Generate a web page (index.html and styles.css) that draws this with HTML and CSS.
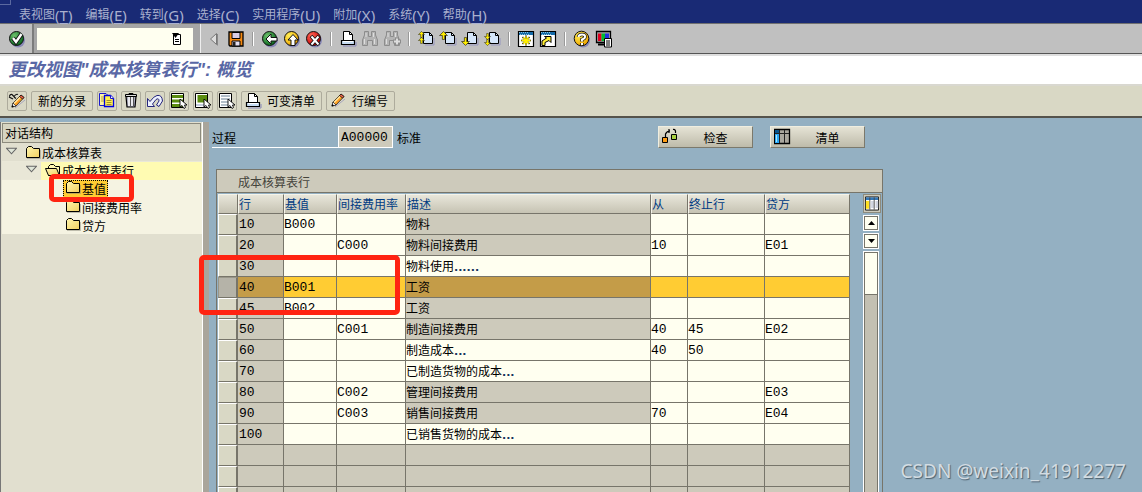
FILE: index.html
```html
<!DOCTYPE html>
<html lang="zh-CN">
<head>
<meta charset="utf-8">
<title>更改视图"成本核算表行": 概览</title>
<link rel="stylesheet" href="styles.css">
</head>
<body>
<svg class="sprite" aria-hidden="true">
  <defs>
    <linearGradient id="gy" x1="0" y1="0" x2="1" y2="1"><stop offset="0" stop-color="#fff6b0"/><stop offset="1" stop-color="#f2d060"/></linearGradient>
    <radialGradient id="gg" cx=".35" cy=".3" r=".7"><stop offset="0" stop-color="#6cc06c"/><stop offset="1" stop-color="#0d6b20"/></radialGradient>
    <radialGradient id="go" cx=".35" cy=".3" r=".7"><stop offset="0" stop-color="#fff05a"/><stop offset="1" stop-color="#f0a800"/></radialGradient>
    <radialGradient id="gr" cx=".35" cy=".3" r=".7"><stop offset="0" stop-color="#ff6a5a"/><stop offset="1" stop-color="#cc0000"/></radialGradient>
    <symbol id="folder" viewBox="0 0 16 14"><path d="M1.500 12.500V3.500L3.500 1.500H6.500L8.500 3.500H14.500V12.500Z" fill="url(#gy)" stroke="#000"/><path d="M2 13.500H15.500V5" fill="none" stroke="#8a8878" opacity=".5"/></symbol>
    <symbol id="folder-open" viewBox="0 0 16 14"><path d="M3.500 12.500V3.500L5.500 1.500H8.500L10.500 3.500H14.500V12.500Z" fill="#fff6b0" stroke="#000"/><path d="M0.500 5.500H11.500L14.500 12.500H3.500Z" fill="url(#gy)" stroke="#000"/></symbol>
    <symbol id="page" viewBox="0 0 18 18"><path d="M6.500 2.500H12.500L15.500 5.500V13.500H6.500Z" fill="#d5e6fa" stroke="#000"/><path d="M12.500 2.500V5.500H15.500" fill="none" stroke="#000"/><path d="M8 15H17V8" fill="none" stroke="#8888c0" opacity=".7"/></symbol>
    <symbol id="up" viewBox="0 0 8 8"><path d="M4 .5L7.500 4H5V7.500H3V4H.5Z" fill="#ffee00" stroke="#000" stroke-width=".5"/></symbol>
    <symbol id="down" viewBox="0 0 8 8"><path d="M4 7.500L7.500 4H5V.5H3V4H.5Z" fill="#ffee00" stroke="#000" stroke-width=".5"/></symbol>
    <symbol id="binoc" viewBox="0 0 18 18"><path d="M3.500 1.500H7.500V6.500H10.500V1.500H14.500V5L16.500 10V15.500H11.500V10.500H6.500V15.500H1.500V10L3.500 5Z" fill="#b4b4b4" stroke="#8c8c8c"/><path d="M5 3V7M3.500 9V14M12.500 3V7M13.500 9V14" stroke="#ddd"/></symbol>
    <symbol id="printer" viewBox="0 0 18 18"><path d="M4.500 11V1.500H10.500L13.500 4.500V11" fill="#fff" stroke="#000"/><path d="M10.500 1.500V4.500H13.500" fill="none" stroke="#000"/><path d="M2.500 10.500H15.500V14.500H2.500Z" fill="#c8def4" stroke="#000" stroke-width="1.200"/><path d="M4 11.500H14" stroke="#fff"/><path d="M4 16H17V12" fill="none" stroke="#8888b8"/></symbol>
    <symbol id="cursor" viewBox="0 0 9 10"><path d="M1 0V8L3 6.500L5 9.500L6.500 8.500L5.500 6H8Z" fill="#fff" stroke="#000" stroke-width=".9"/></symbol>
    <symbol id="pencil" viewBox="0 0 18 18"><path d="M3 14L4 10L12 2L15 4.500L7 13Z" fill="#ff9f20" stroke="#222" stroke-width=".8"/><path d="M5 10.500L12.500 3" stroke="#ffe9a0" stroke-width="1.500"/><path d="M12 2L15 4.500L13.500 6L10.500 3.500Z" fill="#ee6650" stroke="#000" stroke-width=".7"/><path d="M3 14L4 10L7 13Z" fill="#fff" stroke="#222" stroke-width=".7"/><path d="M2.500 14.500L3.500 12L5 13.500Z"/><path d="M6 15L16 7" stroke="#9090bb" stroke-width=".7"/></symbol>
    <symbol id="window" viewBox="0 0 18 18"><path d="M1.500 1.500H16.500V16.500H1.500Z" fill="#fff" stroke="#000" stroke-width="1.200"/><path d="M2 2H16V5H2Z" fill="#146aa8"/><path d="M2 2.500H12M3 4.500H13" stroke="#8bc2dc" stroke-dasharray="1 1"/></symbol>
  </defs>
</svg>

<nav class="menubar" aria-label="菜单">
  <button>表视图<span>(<u>T</u>)</span></button>
  <button>编辑<span>(<u>E</u>)</span></button>
  <button>转到<span>(<u>G</u>)</span></button>
  <button>选择<span>(<u>C</u>)</span></button>
  <button>实用程序<span>(<u>U</u>)</span></button>
  <button>附加<span>(<u>X</u>)</span></button>
  <button>系统<span>(<u>Y</u>)</span></button>
  <button>帮助<span>(<u>H</u>)</span></button>
</nav>

<div class="toolbar">
  <button class="enter" aria-label="回车"><svg class="icon" viewBox="0 0 18 18"><circle cx="10" cy="10.500" r="7" fill="#8888b5"/><circle cx="8.500" cy="8.500" r="7" fill="url(#gg)" stroke="#111"/><path d="M5 8L8 12L13.500 4" fill="none" stroke="#111" stroke-width="4.200"/><path d="M5 8L8 12L13.500 4" fill="none" stroke="#fff" stroke-width="2.400"/></svg></button>
  <div class="command">
    <input class="command-input" type="text" aria-label="命令">
    <button class="history" aria-label="历史"><svg viewBox="0 0 10 12"><path d="M1.500 1.500H8.500V11.500H1.500Z" fill="#fff" stroke="#000"/><path d="M0 0H7L3.500 5Z"/><path d="M3 6.500H7M3 8.500H7" stroke="#000"/></svg></button>
  </div>
  <div class="tools">
    <button class="tool" aria-label="收起"><svg class="icon" viewBox="0 0 18 18"><path d="M11.500 3.500V14.500L5.500 9Z" fill="#ddd" stroke="#777"/><path d="M12.500 4V15.500" stroke="#888"/></svg></button>
    <button class="tool" aria-label="保存"><svg class="icon" viewBox="0 0 18 18"><path d="M2 2H16V16H3L2 15Z" fill="#f58a12" stroke="#000" stroke-width="1.300"/><path d="M5 2.500H13V8.500H5Z" fill="#d8cce6" stroke="#000"/><path d="M5 11H13V16H5Z" fill="#e4def0" stroke="#000"/><path d="M6 12H8.500V16H6Z" fill="#222"/></svg></button>
    <i class="sep"></i>
    <button class="tool" aria-label="返回"><svg class="icon" viewBox="0 0 18 18"><circle cx="10" cy="10.500" r="7" fill="#8888b5"/><circle cx="8.500" cy="8.500" r="7" fill="url(#gg)" stroke="#111"/><path d="M5 9L10 4V7.500H16V11H10V14Z" fill="#fff" stroke="#111"/></svg></button>
    <button class="tool" aria-label="退出"><svg class="icon" viewBox="0 0 18 18"><circle cx="10" cy="10.500" r="7" fill="#8888b5"/><circle cx="8.500" cy="8.500" r="7" fill="url(#go)" stroke="#111"/><path d="M10 4.500L15 10H12V15.500H8V10H5Z" fill="#fff" stroke="#111"/></svg></button>
    <button class="tool" aria-label="取消"><svg class="icon" viewBox="0 0 18 18"><circle cx="10" cy="10.500" r="7" fill="#8888b5"/><circle cx="8.500" cy="8.500" r="7" fill="url(#gr)" stroke="#111"/><path d="M6 6L14 15M14 6L6 15" stroke="#111" stroke-width="3.600"/><path d="M6.500 6.500L13.500 14.500M13.500 6.500L6.500 14.500" stroke="#fff" stroke-width="2"/></svg></button>
    <i class="sep"></i>
    <button class="tool" aria-label="打印"><svg class="icon"><use href="#printer"/></svg></button>
    <button class="tool" aria-label="查找"><svg class="icon"><use href="#binoc"/></svg></button>
    <button class="tool" aria-label="继续查找"><svg class="icon" viewBox="0 0 18 18"><use href="#binoc"/><path d="M10 11.500H18M14 7.500V15.500" stroke="#8c8c8c" stroke-width="4"/><path d="M11 11.500H17M14 8.500V14.500" stroke="#ddd" stroke-width="2"/></svg></button>
    <i class="sep"></i>
    <button class="tool" aria-label="首页"><svg class="icon" viewBox="0 0 18 18"><use href="#page"/><use href="#up" x="0" y="1" width="9" height="7"/><use href="#up" x="0" y="7" width="9" height="7"/></svg></button>
    <button class="tool" aria-label="上一页"><svg class="icon" viewBox="0 0 18 18"><use href="#page"/><use href="#up" x="0" y="1" width="9" height="9"/></svg></button>
    <button class="tool" aria-label="下一页"><svg class="icon" viewBox="0 0 18 18"><use href="#page"/><use href="#down" x="0" y="7" width="9" height="9"/></svg></button>
    <button class="tool" aria-label="末页"><svg class="icon" viewBox="0 0 18 18"><use href="#page"/><use href="#down" x="0" y="3" width="9" height="7"/><use href="#down" x="0" y="9" width="9" height="7"/></svg></button>
    <i class="sep"></i>
    <button class="tool" aria-label="新会话"><svg class="icon" viewBox="0 0 18 18"><use href="#window"/><path d="M9 5.500V15.500M4 10.500H14M5.500 7L12.500 14M12.500 7L5.500 14" stroke="#111" stroke-width="1.600"/><path d="M9 6V15M4.500 10.500H13.500M6 7.500L12 13.500M12 7.500L6 13.500" stroke="#ffee00" stroke-width="1.300"/></svg></button>
    <button class="tool" aria-label="快捷方式"><svg class="icon" viewBox="0 0 18 18"><use href="#window"/><path d="M3 15.500V11L7.500 8L5.500 6.500H12V12.500L10 10.500L6 12.500V15.500Z" fill="#ffee33" stroke="#000"/></svg></button>
    <i class="sep"></i>
    <button class="tool" aria-label="帮助"><svg class="icon" viewBox="0 0 18 18"><circle cx="10" cy="10.500" r="7" fill="#8888b5"/><circle cx="8.500" cy="8.500" r="7.300" fill="url(#go)" stroke="#111"/><path d="M5.500 7Q5.500 4.500 9 4.500T12 7Q12 8.500 9 9.500V11.500M9 13V15" fill="none" stroke="#111" stroke-width="3.400"/><path d="M5.500 7Q5.500 4.500 9 4.500T12 7Q12 8.500 9 9.500V11.500M9 13V15" fill="none" stroke="#fff" stroke-width="2"/></svg></button>
    <button class="tool" aria-label="布局"><svg class="icon" viewBox="0 0 18 18"><path d="M1.500 1.500H15.500V12.500H1.500Z" fill="#aaa" stroke="#000" stroke-width="1.300"/><path d="M3 3.500H6.500V11H3Z" fill="#e00020"/><path d="M6.500 3.500H10V11H6.500Z" fill="#00bb30"/><path d="M10 3.500H14V11H10Z" fill="#2030e0"/><path d="M3 14.500H10" stroke="#000" stroke-width="2"/><path d="M9.500 8.500H16.500V17H9.500Z" fill="#fff" stroke="#000"/><path d="M11 11H15M11 13H15M11 15H15" stroke="#000"/></svg></button>
  </div>
</div>

<h1 class="title">更改视图"成本核算表行": 概览</h1>

<div class="actions">
  <button class="action" aria-label="显示/更改"><svg class="icon" viewBox="0 0 18 18"><use href="#pencil" x="1" y="1"/><path d="M1.500 4.500Q2 2 4 2.500L6 4.500Q8 1.500 10 2.500M1 5L5 7M6 5L8 6.500" fill="none" stroke="#111" stroke-width="1.200"/></svg></button>
  <button class="action action-text">新的分录</button>
  <button class="action" aria-label="复制"><svg class="icon" viewBox="0 0 18 18"><path d="M1.500 1.500H8L11 4.500V13.500H1.500Z" fill="#fff6a0" stroke="#1a1acc"/><path d="M3 5H7M3 7H7M3 9H7" stroke="#b9a040"/><path d="M6.500 3.500H12.500L15.500 6.500V14.500H6.500Z" fill="#ffef50" stroke="#0000dd" stroke-width="1.300"/><path d="M12.500 3.500V6.500H15.500" fill="#fff" stroke="#1a1acc"/><path d="M8.500 8.500H13.500M8.500 10.500H13.500M8.500 12.500H13.500" stroke="#a39030"/></svg></button>
  <button class="action" aria-label="删除"><svg class="icon" viewBox="0 0 18 18"><path d="M4 4.500H14L13 15H5Z" fill="#a9a9bb" stroke="#000" stroke-width="1.200"/><path d="M7 5V14M10 5V14" stroke="#fff" stroke-width="1.500"/><path d="M8.500 5V14M11.500 5V14" stroke="#555"/><path d="M3.500 2.500H14.500V4.500H3.500Z" fill="#ddd" stroke="#000"/><path d="M7 2.500V1.500H11V2.500" fill="none" stroke="#000"/></svg></button>
  <button class="action" aria-label="撤销"><svg class="icon" viewBox="0 0 18 18"><path d="M1.500 6.500V14.500H8.500L6.500 12L10 7.500Q13 5.500 13 9L10.500 13L13 14.500L16.500 9Q16 2.500 11 3.500Q8 4 4 9.500Z" fill="#eef2ff" stroke="#24247c"/></svg></button>
  <button class="action" aria-label="全选"><svg class="icon" viewBox="0 0 18 18"><path d="M1.500 1.500H13.500V15.500H1.500Z" fill="#fff" stroke="#000"/><path d="M2 3H13V6H2ZM2 7.500H13V10.500H2ZM2 12H13V15H2Z" fill="#5b8c10"/><use href="#cursor" x="9" y="7" width="9" height="10"/></svg></button>
  <button class="action" aria-label="选择块"><svg class="icon" viewBox="0 0 18 18"><path d="M1.500 1.500H13.500V15.500H1.500Z" fill="#fff" stroke="#000"/><path d="M3.500 3H13V10.500H3.500Z" fill="#5b8c10"/><path d="M2 13H13" stroke="#89b"/><use href="#cursor" x="9" y="7" width="9" height="10"/></svg></button>
  <button class="action" aria-label="取消全选"><svg class="icon" viewBox="0 0 18 18"><path d="M1.500 1.500H13.500V15.500H1.500Z" fill="#fff" stroke="#000"/><path d="M3 4H12M3 7H12M3 10H12M3 13H12" stroke="#9aabb8" stroke-width="1.500"/><use href="#cursor" x="9" y="7" width="9" height="10"/></svg></button>
  <button class="action action-text"><svg class="icon"><use href="#printer"/></svg>可变清单</button>
  <button class="action action-text"><svg class="icon"><use href="#pencil"/></svg>行编号</button>
</div>

<main class="main">
  <aside class="sidebar">
    <h2 class="sidebar-head">对话结构</h2>
    <ul class="tree">
      <li class="node"><svg class="twisty" viewBox="0 0 10 7"><path d="M.5 1H9.500L5 6Z" fill="#dfe5d8" stroke="#666"/></svg><span class="label"><svg class="folder"><use href="#folder"/></svg>成本核算表</span></li>
      <li class="node level2"><svg class="twisty" viewBox="0 0 10 7"><path d="M.5 1H9.500L5 6Z" fill="#dfe5d8" stroke="#666"/></svg><span class="label active"><svg class="folder"><use href="#folder-open"/></svg>成本核算表行</span></li>
      <li class="node level3"><span class="label selected"><svg class="folder"><use href="#folder"/></svg>基值</span><i class="mark mark-node"></i></li>
      <li class="node level3"><span class="label"><svg class="folder"><use href="#folder"/></svg>间接费用率</span></li>
      <li class="node level3"><span class="label"><svg class="folder"><use href="#folder"/></svg>贷方</span></li>
    </ul>
  </aside>

  <section class="content">
    <div class="form">
      <label class="form-label" for="proc">过程</label>
      <input class="form-value" id="proc" value="A00000" readonly>
      <span class="form-text">标准</span>
      <div class="form-buttons">
        <button class="push"><svg class="icon" viewBox="0 0 18 18"><path d="M3.500 9V6Q5 3 8 3M7 1V5M11 1.500Q14 1 13.500 5" fill="none" stroke="#000" stroke-width="1.200"/><path d="M.5 9.500H5.500V14.500H.5Z" fill="#ff9c12" stroke="#000"/><path d="M9.500 6.500H14.500V11.500H9.500Z" fill="#a8d040" stroke="#000"/></svg><span>检查</span></button>
        <button class="push"><svg class="icon" viewBox="0 0 18 18"><path d="M.5 1.500H15.500V15.500H.5Z" fill="#aaa79e" stroke="#000" stroke-width="1.300"/><path d="M1 2H5V15H1Z" fill="#28a7f5"/><path d="M1 2H5V5H1Z" fill="#07558d"/><path d="M5.500 2V15M10.500 2V15M1 5.500H15" stroke="#222"/><path d="M2.500 7V14" stroke="#a5eaff"/></svg><span>清单</span></button>
      </div>
    </div>

    <div class="group">
      <h2 class="group-title">成本核算表行</h2>
      <div class="group-body">
        <table class="grid">
          <colgroup><col class="c-sel"><col class="c-row"><col class="c-base"><col class="c-rate"><col class="c-desc"><col class="c-from"><col class="c-to"><col class="c-credit"></colgroup>
          <thead><tr><th></th><th>行</th><th>基值</th><th>间接费用率</th><th>描述</th><th>从</th><th>终止行</th><th>贷方</th></tr></thead>
          <tbody>
            <tr><th></th><td class="ro">10</td><td>B000</td><td></td><td class="ro desc">物料</td><td></td><td></td><td></td></tr>
            <tr><th></th><td class="ro">20</td><td></td><td>C000</td><td class="ro desc">物料间接费用</td><td>10</td><td></td><td>E01</td></tr>
            <tr><th></th><td class="ro">30</td><td></td><td></td><td class="desc">物料使用<b>......</b></td><td></td><td></td><td></td></tr>
            <tr class="picked"><th></th><td class="ro">40</td><td>B001</td><td></td><td class="ro desc">工资</td><td></td><td></td><td></td></tr>
            <tr><th></th><td class="ro">45</td><td>B002</td><td></td><td class="ro desc">工资</td><td></td><td></td><td></td></tr>
            <tr><th></th><td class="ro">50</td><td></td><td>C001</td><td class="ro desc">制造间接费用</td><td>40</td><td>45</td><td>E02</td></tr>
            <tr><th></th><td class="ro">60</td><td></td><td></td><td class="desc">制造成本<b>...</b></td><td>40</td><td>50</td><td></td></tr>
            <tr><th></th><td class="ro">70</td><td></td><td></td><td class="desc">已制造货物的成本<b>...</b></td><td></td><td></td><td></td></tr>
            <tr><th></th><td class="ro">80</td><td></td><td>C002</td><td class="ro desc">管理间接费用</td><td></td><td></td><td>E03</td></tr>
            <tr><th></th><td class="ro">90</td><td></td><td>C003</td><td class="ro desc">销售间接费用</td><td>70</td><td></td><td>E04</td></tr>
            <tr><th></th><td class="ro">100</td><td></td><td></td><td class="desc">已销售货物的成本<b>...</b></td><td></td><td></td><td></td></tr>
            <tr class="empty"><th></th><td></td><td></td><td></td><td></td><td></td><td></td><td></td></tr>
            <tr class="empty"><th></th><td></td><td></td><td></td><td></td><td></td><td></td><td></td></tr>
            <tr class="empty"><th></th><td></td><td></td><td></td><td></td><td></td><td></td><td></td></tr>
          </tbody>
        </table>
        <div class="scroll">
          <button class="config" aria-label="配置"><svg viewBox="0 0 16 16"><path d="M.5 .5H15.500V15.500H.5Z" fill="#fff" stroke="#000"/><path d="M1 1H15V4H1Z" fill="#3579b8"/><path d="M1 5H5V14H1Z" fill="#ffe020"/><path d="M7 5H10V13H7ZM12 5H15V13H12Z" fill="#d0d4e0"/><path d="M5.500 1V15M10.500 1V15" stroke="#444"/></svg></button>
          <button class="step" aria-label="向上"><svg viewBox="0 0 9 5"><path d="M0 5L4.500 0L9 5Z"/></svg></button>
          <button class="step" aria-label="向下"><svg viewBox="0 0 9 5"><path d="M0 0H9L4.500 5Z"/></svg></button>
          <div class="track"><div class="thumb"></div></div>
        </div>
      </div>
      <i class="mark mark-rows"></i>
    </div>
  </section>
  <p class="watermark">CSDN @weixin_41912277</p>
</main>
</body>
</html>
```
FILE: styles.css
```css
* { box-sizing: border-box; }
body {
  margin: 0;
  height: 100vh;
  display: flex;
  flex-direction: column;
  overflow: hidden;
  background: #94b0c2;
  color: #000;
  font: 12px/16px "Liberation Sans", "Noto Sans CJK SC", sans-serif;
}
button, input { font: inherit; color: inherit; margin: 0; padding: 0; }
button { border: 0; background: none; }
h1, h2, p, ul { margin: 0; padding: 0; }
.sprite { position: absolute; width: 0; height: 0; }
.icon { display: block; flex: none; width: 18px; height: 18px; }

.menubar {
  position: relative;
  flex: none;
  display: flex;
  gap: 13px;
  height: 24px;
  padding: 6px 0 0 19px;
  background: #192a75;
  border-bottom: 1px solid #707070;
  color: #a9b0ce;
}
.menubar::before {
  content: "";
  position: absolute;
  left: 0;
  top: 0;
  width: 10px;
  height: 4px;
  border-right: 1px solid #5b69a0;
  border-bottom: 1px solid #5b69a0;
}
.menubar button { display: flex; height: 18px; line-height: 18px; }
.menubar span { font-family: "Noto Sans", sans-serif; font-size: 15px; }
.menubar u { text-underline-offset: 2px; }

.toolbar {
  flex: none;
  display: flex;
  align-items: center;
  height: 30px;
  background: #c0c0c0;
  border-bottom: 1px solid #555;
}
.enter { align-self: stretch; width: 34px; padding: 0 0 0 8px; border-right: 2px solid #7c7c7c; }
.command {
  align-self: stretch;
  display: flex;
  align-items: center;
  width: 166px;
  background: #fffff0;
  border: solid #a6a6a6;
  border-width: 4px 7px 3px 3px;
}
.command-input { flex: 1; min-width: 0; height: 20px; padding: 0 4px; border: 0; background: none; outline: 0; }
.history { width: 22px; height: 20px; }
.history svg { display: block; width: 10px; height: 12px; margin: 0 1px; }
.tools { display: flex; align-items: center; align-self: stretch; border-left: 1px solid #eee; padding-left: 2px; }
.tool { width: 22px; padding: 0 2px; }
.sep { width: 12px; height: 14px; border-left: 5px solid #c0c0c0; border-right: 5px solid #c0c0c0; background: linear-gradient(90deg, #999 50%, #fff 50%); }

.title {
  flex: none;
  height: 32px;
  padding: 1px 8px 0;
  border-top: 2px solid #dedede;
  border-bottom: 2px solid #d9d8d0;
  background: #fff;
  color: #5967a5;
  font-size: 18px;
  line-height: 27px;
  font-style: italic;
  font-weight: bold;
}

.actions {
  flex: none;
  display: flex;
  align-items: center;
  gap: 4px;
  height: 32px;
  padding: 0 7px;
  background: #d9d8c5;
  border-bottom: 2px solid #55534c;
}
.action {
  display: flex;
  align-items: center;
  justify-content: center;
  gap: 5px;
  width: 20px;
  height: 20px;
  border: 1px solid #adab9c;
  border-radius: 2px;
}
.action-text { width: auto; padding: 2px 6px 0; }
.action-text .icon { margin: -2px 0 0 -4px; }

.main { position: relative; flex: 1; min-height: 0; display: flex; }
.sidebar {
  flex: none;
  width: 209px;
  margin-top: 4px;
  padding: 1px 0 0 2px;
  background: #e1dfcf;
  border-right: 6px solid #a9a59b;
  box-shadow: inset -1px 0 #fff, inset 1px 0 #777;
}
.sidebar-head {
  height: 20px;
  margin-right: 2px;
  padding: 1px 2px;
  background: #d6d4c2;
  border: 1px solid #8c8a7d;
  font-size: 12px;
  line-height: 18px;
  font-weight: normal;
}
.tree { list-style: none; margin: 1px 1px 0 0; }
.node { position: relative; display: flex; align-items: center; height: 18px; padding-left: 4px; border-bottom: 1px solid #eae8d8; }
.node.level2 { padding-left: 24px; background: #e9e7d7; }
.node.level3 { padding-left: 61px; background: #f5f3e2; border: 0; }
.twisty { flex: none; width: 11px; height: 8px; margin: 0 4px 4px 0; }
.label { display: flex; align-items: center; gap: 1px; height: 18px; padding: 3px 1px 0 2px; white-space: nowrap; }
.node:first-child .label, .label.active { padding-left: 4px; }
.label.active { flex: 1; background: #fffbb2; }
.label.selected { background: #ffcc33; border: 1px dotted #000; padding: 1px 1px 0; }
.folder { flex: none; align-self: flex-start; width: 16px; height: 14px; margin-top: -2px; }

.content { flex: 1; min-width: 0; display: flex; flex-direction: column; padding: 8px 4px 0 3px; }
.form { flex: none; display: flex; height: 24px; }
.form-label { width: 126px; height: 22px; border-bottom: 1px solid #fff; line-height: 26px; }
.form-value {
  width: 55px;
  height: 22px;
  padding: 0 2px;
  border: 1px solid #fff;
  border-radius: 0;
  background: #cdcabb;
  font: 13px/18px "Liberation Mono", monospace;
}
.form-text { width: 265px; padding-left: 4px; line-height: 26px; }
.form-buttons { display: flex; gap: 17px; }
.push {
  display: flex;
  align-items: center;
  width: 95px;
  height: 22px;
  padding: 0 3px;
  border: 1px solid;
  border-color: #f0eee0 #7b796c #7b796c #f0eee0;
  background: linear-gradient(#e5e3d5, #bebbaa);
}
.push span { flex: 1; padding: 3px 0 0 2px; }
.group {
  position: relative;
  flex: 1;
  min-height: 0;
  width: 667px;
  margin: 19px 0 0 4px;
  border: 1px solid #77756a;
  border-bottom: 0;
}
.group-title {
  height: 23px;
  padding: 3px 21px 0;
  background: #cdcabb;
  border-bottom: 1px solid #77756a;
  color: #45443c;
  font-size: 12px;
  line-height: 20px;
  font-weight: normal;
}
.group-body { display: flex; justify-content: space-between; height: calc(100% - 23px); padding: 1px 1px 0; overflow: hidden; }
.grid { table-layout: fixed; flex: none; width: 632px; height: max-content; border-collapse: separate; border-spacing: 0; }
.c-sel { width: 20px; }
.c-row { width: 46px; }
.c-base { width: 53px; }
.c-rate { width: 69px; }
.c-desc { width: 245px; }
.c-from { width: 37px; }
.c-to { width: 77px; }
.c-credit { width: 85px; }
.grid th, .grid td { height: 21px; padding: 2px 0 0; white-space: nowrap; text-align: left; font-weight: normal; line-height: 18px; }
.grid thead th {
  height: 20px;
  padding: 2px 0 0;
  background: linear-gradient(#e8e6da, #c6c3b3);
  border: 1px solid;
  border-color: #f5f4ea #77756a #77756a #f5f4ea;
  color: #003b82;
  line-height: 16px;
}
.grid tbody th {
  background: #d9d8c5;
  border: 1px solid;
  border-color: #fff #77756a #77756a #fff;
  border-right-width: 2px;
}
.grid td {
  background: #fffff0;
  border-right: 1px solid #77756a;
  border-bottom: 1px solid #77756a;
  font-family: "Liberation Mono", monospace;
  font-size: 13px;
}
.grid td.ro:nth-child(2) { padding-left: 1px; }
.grid td.desc { font-family: "Liberation Sans", "Noto Sans CJK SC", sans-serif; font-size: 12px; }
.grid td b { color: #16345e; font-family: "DejaVu Sans", sans-serif; font-size: 11px; line-height: 1px; }
.grid td.ro, .grid .empty td { background: #cdcabb; }
.grid .picked td { background: #ffcc33; }
.grid .picked td.ro { background: #c49c48; }
.grid .picked th { background: #b5b3a8; border-color: #999789 #77756a #77756a #999789; }

.scroll { flex: none; display: flex; flex-direction: column; gap: 2px; width: 18px; }
.config { width: 18px; height: 19px; padding: 1px; background: #cdcabb; border: 1px solid #8c8a7d; }
.config svg { display: block; width: 14px; height: 15px; }
.step { display: flex; align-items: center; justify-content: center; width: 16px; height: 16px; background: #fffff0; border: 1px solid #77756a; outline: 1px solid #fff; outline-offset: -1px; box-shadow: inset 0 0 0 1px #77756a; }
.step svg { width: 7px; height: 4px; }
.track { flex: 1; width: 16px; background: #c3c0b2; border: 1px solid #fff; border-bottom: 0; box-shadow: inset 1px 0 #77756a, inset -1px 0 #77756a; }
.thumb { height: 43px; background: #fffff0; border: 1px solid #77756a; }

.mark { position: absolute; z-index: 2; border: 5px solid #ff2412; border-radius: 5px; pointer-events: none; }
.mark-node { left: 47px; top: -6px; width: 85px; height: 28px; }
.mark-rows { left: -18px; top: 85px; width: 201px; height: 60px; }
.watermark {
  position: absolute;
  right: 16px;
  bottom: 9px;
  color: #d3dce2;
  font: 19px/24px "Noto Sans", sans-serif;
  text-shadow: 1px 1px 1px #4e6370;
}
```
